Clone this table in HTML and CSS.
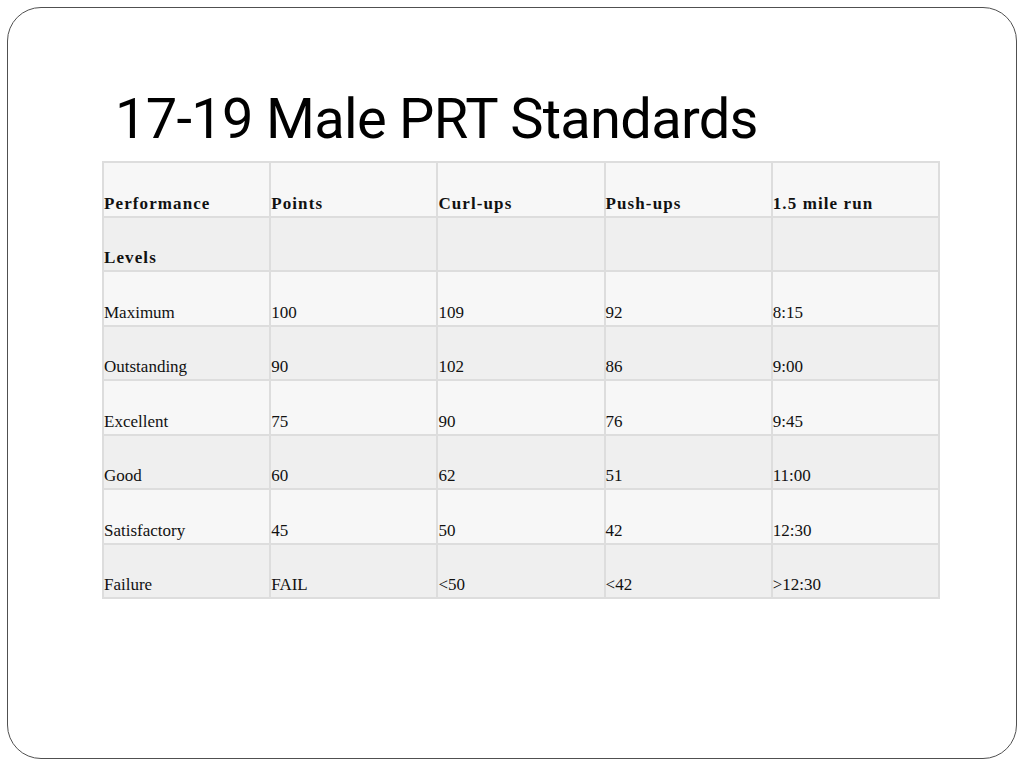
FILE: index.html
```html
<!DOCTYPE html>
<html>
<head>
<meta charset="utf-8">
<link rel="stylesheet" href="styles.css">
</head>
<body>
<div class="slide">
  <h1 class="title">17-19 Male PRT Standards</h1>
  <table class="prt">
    <tr class="light head"><td>Performance</td><td>Points</td><td>Curl-ups</td><td>Push-ups</td><td>1.5 mile run</td></tr>
    <tr class="dark head"><td>Levels</td><td></td><td></td><td></td><td></td></tr>
    <tr class="light"><td>Maximum</td><td>100</td><td>109</td><td>92</td><td>8:15</td></tr>
    <tr class="dark"><td>Outstanding</td><td>90</td><td>102</td><td>86</td><td>9:00</td></tr>
    <tr class="light"><td>Excellent</td><td>75</td><td>90</td><td>76</td><td>9:45</td></tr>
    <tr class="dark"><td>Good</td><td>60</td><td>62</td><td>51</td><td>11:00</td></tr>
    <tr class="light"><td>Satisfactory</td><td>45</td><td>50</td><td>42</td><td>12:30</td></tr>
    <tr class="dark"><td>Failure</td><td>FAIL</td><td>&lt;50</td><td>&lt;42</td><td>&gt;12:30</td></tr>
  </table>
</div>
</body>
</html>
```
FILE: styles.css
```css
html, body {
  margin: 0;
  padding: 0;
  background: #ffffff;
}
.slide {
  box-sizing: border-box;
  margin: 7px 0 0 7px;
  width: 1010px;
  height: 752px;
  border: 1px solid #505050;
  border-radius: 34px;
  padding: 0 0 0 94px;
}
.title {
  margin: 0;
  padding-top: 79px;
  padding-left: 13px;
  font-family: "Liberation Sans Narrow", "Roboto", "Liberation Sans", sans-serif;
  font-weight: normal;
  font-size: 56px;
  letter-spacing: -0.7px;
  line-height: 64px;
  color: #000;
  height: 74px;
}
.prt {
  border-collapse: collapse;
  width: 838px;
  table-layout: fixed;
  font-family: "Liberation Serif", serif;
  font-size: 17px;
  color: #111;
}
.prt td {
  height: 50.5px;
  border: 2px solid #dddddd;
  vertical-align: bottom;
  padding: 0 2px 2px 0;
  line-height: 20px;
  white-space: nowrap;
}
.prt tr.light td { background: #f7f7f7; }
.prt tr.dark td { background: #efefef; }
.prt tr.head td {
  font-weight: bold;
  letter-spacing: 1.1px;
}
```
